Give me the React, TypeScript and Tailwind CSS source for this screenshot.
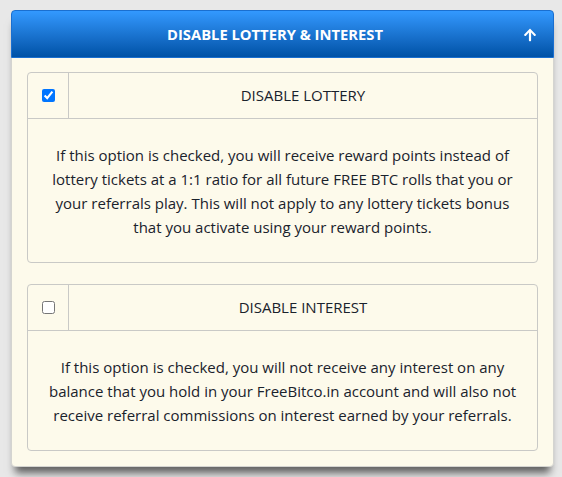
import { FaArrowUp } from "react-icons/fa";

type OptionCardProps = {
  title: string;
  checked: boolean;
  text: string;
};

function OptionCard({ title, checked, text }: OptionCardProps) {
  return (
    <div className="rounded-[4px] border border-[#c9c9c6] bg-[#fdfaeb]">
      <div className="flex h-[46px] border-b border-[#c9c9c6]">
        <div className="flex w-[41px] items-center justify-center border-r border-[#c9c9c6]">
          <input type="checkbox" defaultChecked={checked} className="m-0 h-[13px] w-[13px]" />
        </div>
        <div className="flex flex-1 items-center justify-center text-[15px] text-[#1a222c]">
          {title}
        </div>
      </div>
      <p className="px-[16px] pt-[24px] pb-[23px] text-center text-[15px] leading-[24px] text-[#1a222c]">
        {text}
      </p>
    </div>
  );
}

export default function App() {
  return (
    <div
      className="min-h-[477px] bg-[#e8e8e8] pt-[10px] pl-[11px]"
      style={{ fontFamily: '"Open Sans", "Liberation Sans", sans-serif' }}
    >
      <div className="w-[543px] rounded-[4px] border border-[#d4d4d0] bg-[#fdfaeb] shadow-[0_10px_8px_-4px_rgba(0,0,0,0.6)]">
        <div className="-m-px grid h-[48px] grid-cols-[1fr_auto] items-center rounded-t-[4px] border border-[#1a6fd0] bg-gradient-to-b from-[#3399ff] to-[#0052a6] pl-[15px] pr-[16px]">
          <div className="text-center text-[14.75px] font-bold text-white">
            DISABLE LOTTERY &amp; INTEREST
          </div>
          <FaArrowUp className="mt-[2px] h-[14px] w-[14px] text-white" />
        </div>
        <div className="flex flex-col gap-[21px] px-[15px] pt-[15px] pb-[15px]">
          <OptionCard
            title="DISABLE LOTTERY"
            checked
            text="If this option is checked, you will receive reward points instead of lottery tickets at a 1:1 ratio for all future FREE BTC rolls that you or your referrals play. This will not apply to any lottery tickets bonus that you activate using your reward points."
          />
          <OptionCard
            title="DISABLE INTEREST"
            checked={false}
            text="If this option is checked, you will not receive any interest on any balance that you hold in your FreeBitco.in account and will also not receive referral commissions on interest earned by your referrals."
          />
        </div>
      </div>
    </div>
  );
}
